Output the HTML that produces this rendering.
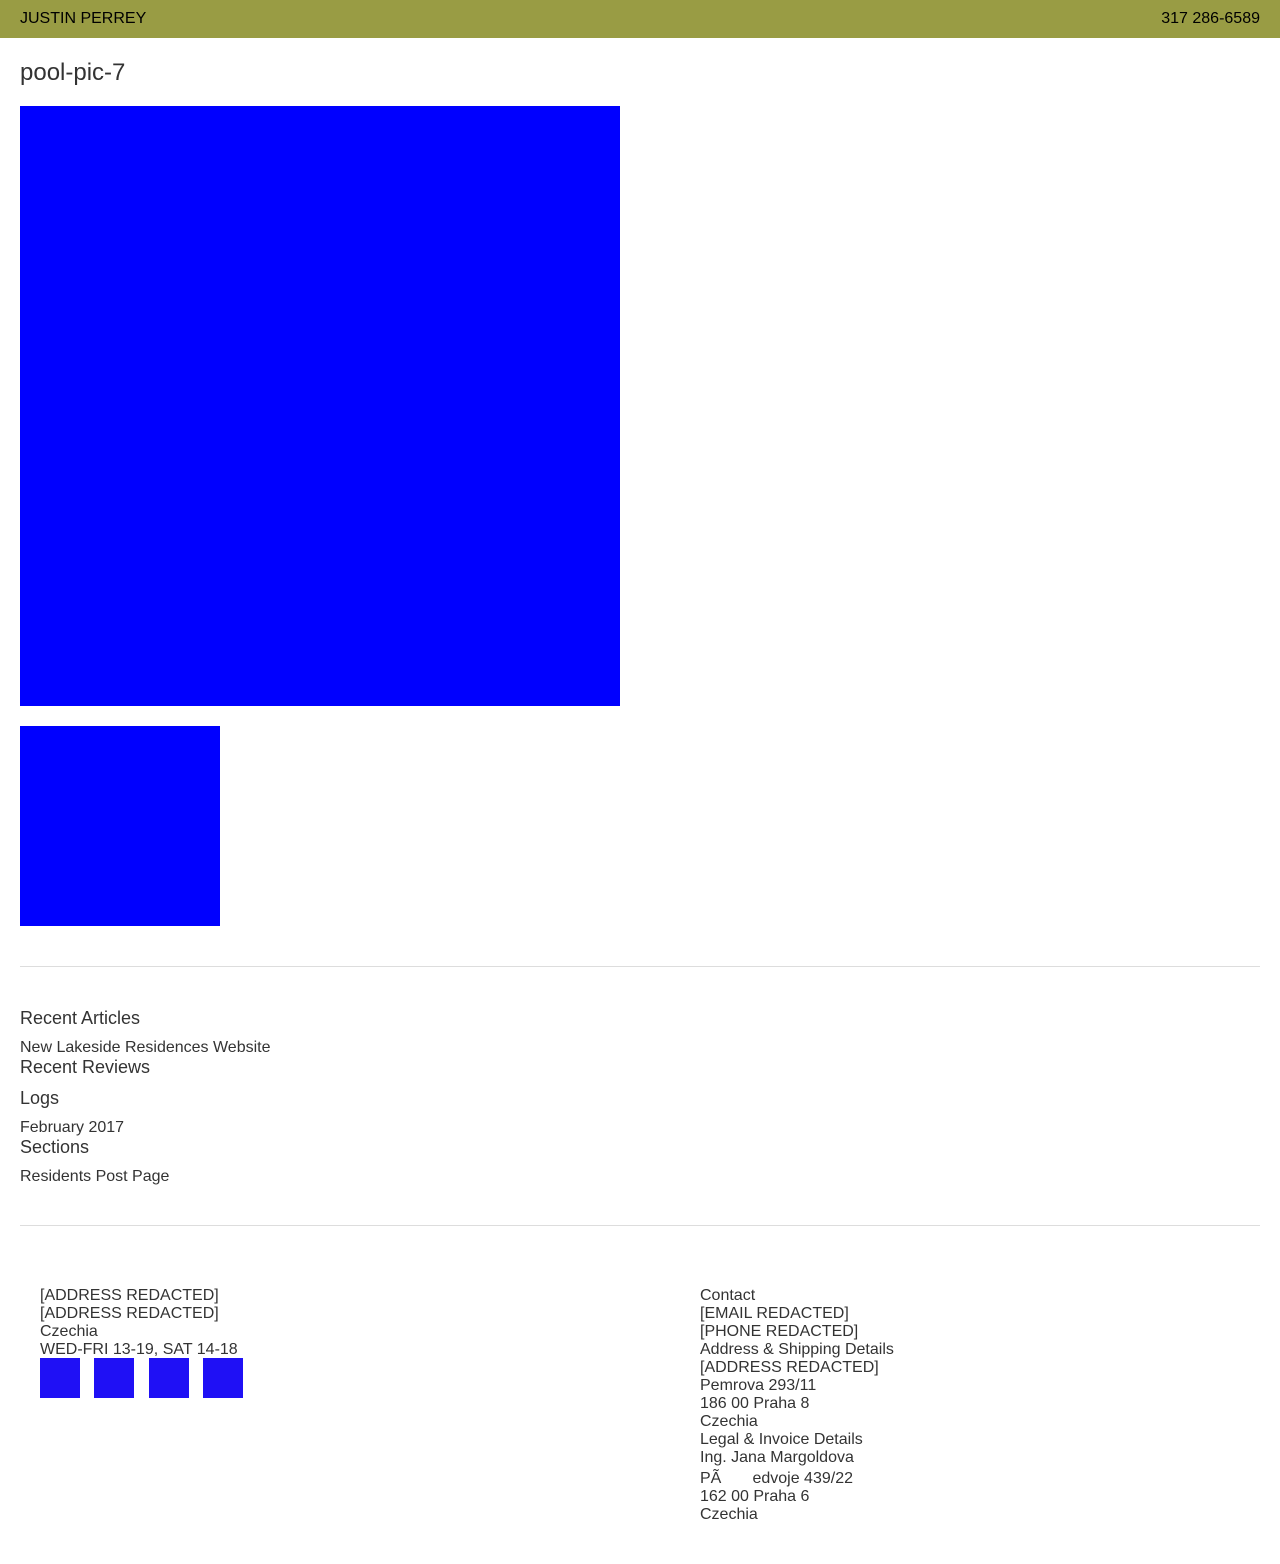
<!DOCTYPE html>
<html><head><meta charset="utf-8"><style>
body{margin:0;width:1280px;height:1564px;background:#fff;font-family:"Liberation Sans",Arial,sans-serif;color:#333;position:relative}
.a{position:absolute;white-space:nowrap}
.hdr{position:absolute;left:0;top:0;width:1280px;height:38px;background:#999c44}
.b{position:absolute;background:#0000ff}
.hr{position:absolute;left:20px;width:1240px;height:1px;background:#ddd}
.f{font-size:16px;line-height:18px}
.sq{position:absolute;top:1358px;width:40px;height:40px;background:#1f10f5}
</style></head><body>
<div class="hdr"></div>
<div class="a" style="left:20px;top:10px;font-size:16px;color:#000">JUSTIN PERREY</div>
<div class="a" style="right:20px;top:10px;font-size:16px;color:#000">317 286-6589</div>
<div class="a" style="left:20px;top:59px;font-size:24px">pool-pic-7</div>
<div class="b" style="left:20px;top:106px;width:600px;height:600px"></div>
<div class="b" style="left:20px;top:726px;width:200px;height:200px"></div>
<div class="hr" style="top:966px"></div>
<div class="a" style="left:20px;top:1008px;font-size:18px">Recent Articles</div>
<div class="a" style="left:20px;top:1039px;font-size:16px">New Lakeside Residences Website</div>
<div class="a" style="left:20px;top:1057px;font-size:18px">Recent Reviews</div>
<div class="a" style="left:20px;top:1088px;font-size:18px">Logs</div>
<div class="a" style="left:20px;top:1119px;font-size:16px">February 2017</div>
<div class="a" style="left:20px;top:1137px;font-size:18px">Sections</div>
<div class="a" style="left:20px;top:1168px;font-size:16px">Residents Post Page</div>
<div class="hr" style="top:1225px"></div>
<div class="a f" style="left:40px;top:1287px">[ADDRESS REDACTED]<br>[ADDRESS REDACTED]<br>Czechia<br>WED-FRI 13-19, SAT 14-18</div>
<div class="sq" style="left:40px"></div><div class="sq" style="left:94px"></div><div class="sq" style="left:149px"></div><div class="sq" style="left:203px"></div>
<div class="a f" style="left:700px;top:1287px">Contact<br>[EMAIL REDACTED]<br>[PHONE REDACTED]<br>Address &amp; Shipping Details<br>[ADDRESS REDACTED]<br>Pemrova 293/11<br>186 00 Praha 8<br>Czechia<br>Legal &amp; Invoice Details<br>Ing. Jana Margoldova<br><span style="display:inline-block;margin-top:3px">PÃ&nbsp;&nbsp;&nbsp;&nbsp;&nbsp;&nbsp;&nbsp;edvoje 439/22</span><br>162 00 Praha 6<br>Czechia</div>
</body></html>
